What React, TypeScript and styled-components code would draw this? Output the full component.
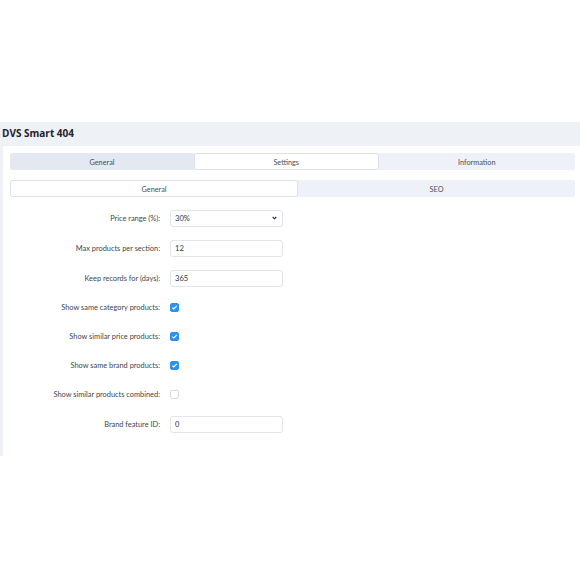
import React from "react";
import styled, { createGlobalStyle } from "styled-components";

const Global = createGlobalStyle`
  html, body { margin: 0; padding: 0; background: #ffffff; }
  body { font-family: Lato, "Open Sans", sans-serif; color: #333; }
`;

const Page = styled.div`
  padding-top: 122px;
`;

const Header = styled.div`
  height: 24px;
  background: #eef1f6;
  display: flex;
  align-items: center;
  padding: 0 0 3px 2px;
  box-sizing: border-box;
`;

const Title = styled.h1`
  margin: 0;
  font-family: "Open Sans", sans-serif;
  font-size: 10px;
  font-weight: 700;
  color: #1f2329;
`;

const Panel = styled.div`
  border-left: 3px solid #eef1f6;
  padding: 7px 5px 17px 7px;
  display: flex;
  flex-direction: column;
`;

const TabRow = styled.div<{ $mt?: number }>`
  display: flex;
  margin-top: ${(p) => p.$mt ?? 0}px;
  background: #eef1f7;
  border-radius: 3px;
`;

const Tab = styled.div<{ $state: "active" | "hover" | "idle" }>`
  flex: 1 1 auto;
  height: 17px;
  box-sizing: border-box;
  display: flex;
  align-items: center;
  justify-content: center;
  padding-top: 1px;
  font-size: 7.3px;
  color: #4a4f57;
  border-radius: 3px;
  background: ${(p) =>
    p.$state === "active" ? "#ffffff" : p.$state === "hover" ? "#e3e8f1" : "#eef1f7"};
  border: 1px solid
    ${(p) => (p.$state === "active" ? "#dde2ea" : "transparent")};
`;

const Form = styled.div`
  margin-top: 6px;
  display: flex;
  flex-direction: column;
`;

const Row = styled.div<{ $tall: boolean }>`
  height: ${(p) => (p.$tall ? 30 : 29)}px;
  display: grid;
  grid-template-columns: 150px 113px;
  column-gap: 10px;
  align-items: center;
`;

const Label = styled.label`
  text-align: right;
  font-size: 7.4px;
  color: #40454d;
  white-space: nowrap;
`;

const Field = styled.div`
  height: 17px;
  box-sizing: border-box;
  border: 1px solid #e1e5ec;
  border-radius: 3px;
  display: flex;
  align-items: center;
  justify-content: space-between;
  padding: 0 5px 0 4px;
  font-size: 7.6px;
  color: #2f3339;
  background: #fff;
`;

const Check = styled.span<{ $on: boolean }>`
  width: 9px;
  height: 9px;
  box-sizing: border-box;
  border-radius: 2px;
  display: flex;
  align-items: center;
  justify-content: center;
  background: ${(p) => (p.$on ? "#2a93f0" : "#fff")};
  border: 1px solid ${(p) => (p.$on ? "#2a93f0" : "#d6dbe3")};
`;

const Chevron = () => (
  <svg width="5" height="4" viewBox="0 0 5 4">
    <path d="M0.7 1 L2.5 2.8 L4.3 1" fill="none" stroke="#222" strokeWidth="1.1" />
  </svg>
);

const Tick = () => (
  <svg width="7" height="7" viewBox="0 0 7 7">
    <path d="M1.3 3.6 L2.8 5 L5.8 1.9" fill="none" stroke="#fff" strokeWidth="1.1" />
  </svg>
);

type Item =
  | { label: string; kind: "select"; value: string }
  | { label: string; kind: "text"; value: string }
  | { label: string; kind: "check"; on: boolean };

const items: Item[] = [
  { label: "Price range (%):", kind: "select", value: "30%" },
  { label: "Max products per section:", kind: "text", value: "12" },
  { label: "Keep records for (days):", kind: "text", value: "365" },
  { label: "Show same category products:", kind: "check", on: true },
  { label: "Show similar price products:", kind: "check", on: true },
  { label: "Show same brand products:", kind: "check", on: true },
  { label: "Show similar products combined:", kind: "check", on: false },
  { label: "Brand feature ID:", kind: "text", value: "0" },
];

export default function App() {
  return (
    <Page>
      <Global />
      <Header>
        <Title>DVS Smart 404</Title>
      </Header>
      <Panel>
        <TabRow>
          <Tab $state="hover">General</Tab>
          <Tab $state="active">Settings</Tab>
          <Tab $state="idle">Information</Tab>
        </TabRow>
        <TabRow $mt={10}>
          <Tab $state="active">General</Tab>
          <Tab $state="idle">SEO</Tab>
        </TabRow>
        <Form>
          {items.map((it) => (
            <Row key={it.label} $tall={it.kind !== "check"}>
              <Label>{it.label}</Label>
              {it.kind === "check" ? (
                <Check $on={it.on}>{it.on && <Tick />}</Check>
              ) : (
                <Field>
                  <span>{it.value}</span>
                  {it.kind === "select" && <Chevron />}
                </Field>
              )}
            </Row>
          ))}
        </Form>
      </Panel>
    </Page>
  );
}
